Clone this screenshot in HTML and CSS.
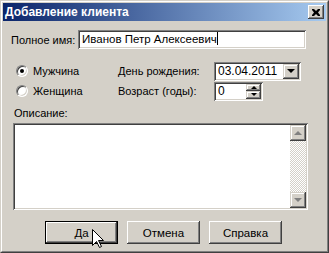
FILE: index.html
```html
<!DOCTYPE html>
<html lang="ru">
<head>
<meta charset="UTF-8">
<title>Добавление клиента</title>
<link rel="stylesheet" href="styles.css">
</head>
<body>

<div class="window">
    <div class="frame">
        <div class="title-bar">
            <span class="title-text">Добавление клиента</span>
            <div class="title-btn">
                <svg width="8" height="7" viewBox="0 0 8 7"><path d="M0 0h2l2 2 2-2h2v1L6 3.5 8 6v1H6L4 5 2 7H0V6l2-2.5L0 1z" fill="#000"/></svg>
            </div>
        </div>

        <div class="content">
            <div class="name-row">
                <label class="name-label">Полное имя:</label>
                <div class="field name-field">Иванов Петр Алексеевич<span class="caret"></span></div>
            </div>

            <div class="person-grid">
                <div class="radio-item">
                    <span class="radio checked"></span>
                    <span>Мужчина</span>
                </div>
                <div class="grid-label">День рождения:</div>
                <div class="field combo">
                    <span class="combo-value">03.04.2011</span>
                    <span class="small-btn combo-btn"><span class="arrow-down"></span></span>
                </div>

                <div class="radio-item">
                    <span class="radio"></span>
                    <span>Женщина</span>
                </div>
                <div class="grid-label">Возраст (годы):</div>
                <div class="field spin">
                    <span class="spin-value">0</span>
                    <span class="spin-btns">
                        <span class="small-btn spin-btn"><span class="arrow-up"></span></span>
                        <span class="small-btn spin-btn"><span class="arrow-down"></span></span>
                    </span>
                </div>
            </div>

            <div class="desc-label">Описание:</div>
            <div class="field memo">
                <div class="memo-text"></div>
                <div class="scrollbar">
                    <span class="small-btn scroll-btn"><span class="arrow-up gray"></span></span>
                    <span class="scroll-track"></span>
                    <span class="small-btn scroll-btn"><span class="arrow-down gray"></span></span>
                </div>
            </div>

            <div class="buttons">
                <button class="btn default">Да</button>
                <button class="btn">Отмена</button>
                <button class="btn">Справка</button>
            </div>
        </div>
    </div>

    <!-- курсор мыши над кнопкой -->
    <svg class="mouse" width="13" height="20" viewBox="0 0 13 20">
        <path d="M0.5 0.5V16.5L4.5 12.5L7.5 18.5L9.5 17.5L6.5 11.5H11.5Z" fill="#fff" stroke="#000"/>
    </svg>
</div>

</body>
</html>
```

FILE: styles.css
```css
body {
    margin: 0;
    background: #d4d0c8;
    font-family: "Liberation Sans", Arial, sans-serif;
    font-size: 11px;
    color: #000;
}
.window {
    position: relative;
    width: 329px;
    height: 253px;
    box-sizing: border-box;
    border: 1px solid;
    border-color: #d4d0c8 #404040 #404040 #d4d0c8;
    background: #d4d0c8;
}
.frame {
    height: 100%;
    box-sizing: border-box;
    border: 1px solid;
    border-color: #fff #808080 #808080 #fff;
    padding: 1px;
}
.title-bar {
    height: 18px;
    display: flex;
    align-items: center;
    justify-content: space-between;
    padding: 0 2px 0 2px;
    background: linear-gradient(to right, #0a246a, #a6caf0);
}
.title-text {
    color: #fff;
    font-weight: bold;
    font-size: 12px;
}
.title-btn {
    width: 16px;
    height: 14px;
    box-sizing: border-box;
    display: flex;
    align-items: center;
    justify-content: center;
    background: #d4d0c8;
    box-shadow: inset -1px -1px #404040, inset 1px 1px #fff, inset -2px -2px #808080;
}
.content {
    padding: 0 0 0 8px;
}
.field {
    background: #fff;
    box-sizing: border-box;
    box-shadow: inset 1px 1px #808080, inset -1px -1px #fff, inset 2px 2px #404040, inset -2px -2px #d4d0c8;
}
.name-row {
    display: flex;
    align-items: center;
    margin-top: 9px;
}
.name-label {
    width: 67px;
}
.name-field {
    width: 228px;
    height: 19px;
    line-height: 19px;
    padding-left: 4px;
    font-size: 11.5px;
}
.caret {
    display: inline-block;
    width: 1px;
    height: 13px;
    background: #000;
    vertical-align: -2px;
}
.person-grid {
    display: grid;
    grid-template-columns: 107px 96px auto;
    grid-template-rows: 18px 18px;
    row-gap: 2px;
    align-items: center;
    margin-top: 13px;
}
.radio-item {
    display: flex;
    align-items: center;
    gap: 5px;
    padding-left: 5px;
}
.radio {
    width: 12px;
    height: 12px;
    box-sizing: border-box;
    border-radius: 50%;
    background: #fff;
    border: 1px solid;
    border-color: #808080 #fff #fff #808080;
    box-shadow: inset 1px 1px #404040, inset -1px -1px #d4d0c8;
    position: relative;
}
.radio.checked::after {
    content: "";
    position: absolute;
    left: 3px;
    top: 3px;
    width: 4px;
    height: 4px;
    border-radius: 50%;
    background: #000;
}
.combo, .spin {
    height: 19px;
    display: flex;
    align-items: center;
    padding: 2px;
}
.combo {
    width: 87px;
}
.spin {
    width: 49px;
}
.combo-value, .spin-value {
    flex: 1;
    padding-left: 2px;
    font-size: 12px;
}
.small-btn {
    display: flex;
    align-items: center;
    justify-content: center;
    box-sizing: border-box;
    background: #d4d0c8;
    box-shadow: inset -1px -1px #404040, inset 1px 1px #d4d0c8, inset -2px -2px #808080, inset 2px 2px #fff;
}
.combo-btn {
    width: 16px;
    height: 15px;
}
.spin-btns {
    display: flex;
    flex-direction: column;
    align-self: stretch;
}
.spin-btn {
    width: 15px;
    flex: 1;
}
.arrow-down, .arrow-up {
    width: 0;
    height: 0;
    border-left: 4px solid transparent;
    border-right: 4px solid transparent;
}
.arrow-down {
    border-top: 4px solid #000;
}
.arrow-up {
    border-bottom: 4px solid #000;
}
.spin-btn .arrow-down, .spin-btn .arrow-up {
    border-left-width: 3px;
    border-right-width: 3px;
    border-top-width: 3px;
    border-bottom-width: 3px;
}
.spin-btn .arrow-down {
    border-bottom: 0;
}
.spin-btn .arrow-up {
    border-top: 0;
}
.arrow-up.gray {
    border-bottom-color: #808080;
}
.arrow-down.gray {
    border-top-color: #808080;
}
.desc-label {
    margin-top: 7px;
    padding-left: 3px;
    line-height: 13px;
}
.memo {
    margin: 3px 0 0 2px;
    width: 295px;
    height: 87px;
    padding: 2px;
    display: flex;
}
.memo-text {
    flex: 1;
}
.scrollbar {
    width: 16px;
    display: flex;
    flex-direction: column;
}
.scroll-btn {
    height: 16px;
}
.scroll-track {
    flex: 1;
    background: repeating-conic-gradient(#fff 0 25%, #d4d0c8 0 50%) 0 0 / 2px 2px;
}
.buttons {
    display: flex;
    gap: 9px;
    margin-top: 11px;
    padding-left: 34px;
}
.btn {
    width: 73px;
    height: 23px;
    padding: 0;
    border: none;
    background: #d4d0c8;
    font-family: inherit;
    font-size: 11.5px;
    color: #000;
    box-shadow: inset -1px -1px #404040, inset 1px 1px #fff, inset -2px -2px #808080, inset 2px 2px #d4d0c8;
}
.btn.default {
    box-shadow: inset 0 0 0 1px #000, inset -2px -2px #404040, inset 2px 2px #fff, inset -3px -3px #808080;
}
.mouse {
    position: absolute;
    left: 91px;
    top: 228px;
}
```
